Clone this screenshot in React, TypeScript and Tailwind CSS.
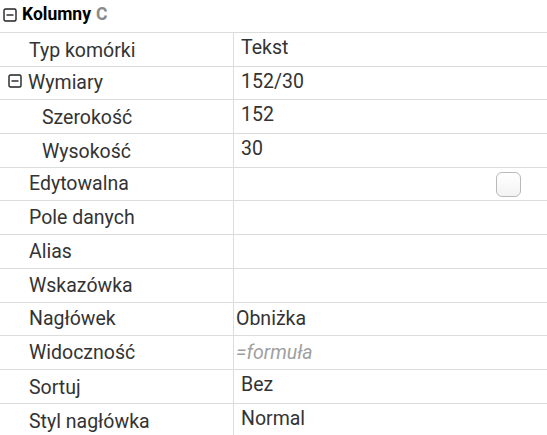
import React from "react";

type Row = {
  label: string;
  indent?: number;
  toggle?: boolean;
  value?: string;
  valueKind?: "raised" | "flat" | "formula" | "checkbox";
  shift?: number;
};

const rows: Row[] = [
  { label: "Typ komórki", value: "Tekst", valueKind: "raised" },
  { label: "Wymiary", toggle: true, value: "152/30", valueKind: "raised" },
  { label: "Szerokość", indent: 42, value: "152", valueKind: "raised" },
  { label: "Wysokość", indent: 42, value: "30", valueKind: "raised" },
  { label: "Edytowalna", valueKind: "checkbox" },
  { label: "Pole danych" },
  { label: "Alias" },
  { label: "Wskazówka" },
  { label: "Nagłówek", value: "Obniżka", valueKind: "flat" },
  { label: "Widoczność", value: "=formuła", valueKind: "formula" },
  { label: "Sortuj", value: "Bez", valueKind: "raised", shift: 1 },
  { label: "Styl nagłówka", value: "Normal", valueKind: "raised", shift: 1 },
];

function MinusBox({ className = "" }: { className?: string }) {
  return (
    <svg width="14" height="14" viewBox="0 0 14 14" className={className}>
      <rect x="1" y="1" width="12" height="12" rx="1.5" fill="white" stroke="#222" strokeWidth="1.4" />
      <line x1="3.5" y1="7" x2="10.5" y2="7" stroke="#222" strokeWidth="1.4" />
    </svg>
  );
}

function ValueCell({ row }: { row: Row }) {
  if (row.valueKind === "checkbox") {
    return (
      <div className="flex h-full items-center justify-end pr-[26px]">
        <div className="h-[25px] w-[25px] rounded-[6px] border border-[#b9b9b9] bg-gradient-to-b from-white to-[#f3f3f3]" />
      </div>
    );
  }
  if (!row.value) return null;
  if (row.valueKind === "formula") {
    return (
      <div className="flex h-full items-center pl-[2px] italic text-[#a0a0a0]">{row.value}</div>
    );
  }
  if (row.valueKind === "flat") {
    return <div className="flex h-full items-center pl-[2px]">{row.value}</div>;
  }
  return (
    <div className={`flex h-full items-center pl-[7px] ${row.shift ? "pb-[7px]" : "pb-[5px]"}`}>
      {row.value}
    </div>
  );
}

export default function App() {
  return (
    <div
      className="h-[435px] w-[547px] overflow-hidden bg-white text-[19.5px] text-[#333]"
      style={{ fontFamily: "Roboto, 'Liberation Sans', sans-serif" }}
    >
      {/* Section header */}
      <div className="flex h-[33px] items-center gap-[5px] border-b border-[#dcdcdc] pl-[3px] pb-[3px]">
        <MinusBox />
        <span className="text-[17.5px] font-bold text-black">Kolumny</span>
        <span className="text-[17.5px] font-bold text-[#8a8a8a]">C</span>
      </div>

      {rows.map((row) => (
        <div
          key={row.label}
          className="grid h-[33.7px] grid-cols-[234px_1fr] border-b border-[#dcdcdc]"
        >
          <div
            className="flex items-center border-r border-[#dcdcdc]"
            style={{ paddingLeft: row.toggle ? 8 : row.indent ?? 29 }}
          >
            {row.toggle && <MinusBox className="mr-[6px] mb-[6px]" />}
            <span className={row.toggle ? "pb-[2px]" : ""}>{row.label}</span>
          </div>
          <ValueCell row={row} />
        </div>
      ))}
    </div>
  );
}
